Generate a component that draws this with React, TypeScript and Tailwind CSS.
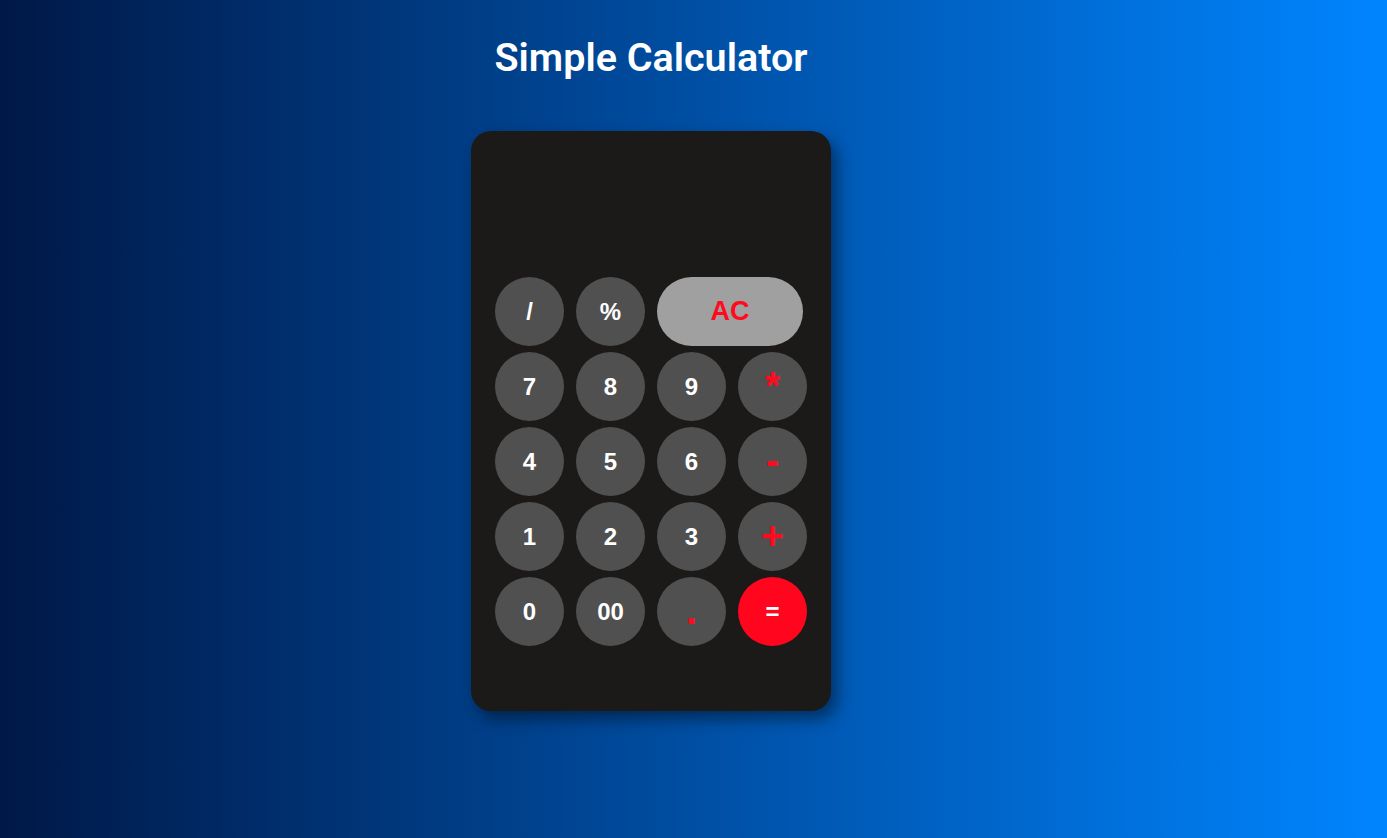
import React from "react";

type Btn = { label: string; kind: "num" | "op" | "ac" | "eq"; span?: boolean };

const rows: Btn[] = [
  { label: "/", kind: "num" },
  { label: "%", kind: "num" },
  { label: "AC", kind: "ac", span: true },
  { label: "7", kind: "num" },
  { label: "8", kind: "num" },
  { label: "9", kind: "num" },
  { label: "*", kind: "op" },
  { label: "4", kind: "num" },
  { label: "5", kind: "num" },
  { label: "6", kind: "num" },
  { label: "-", kind: "op" },
  { label: "1", kind: "num" },
  { label: "2", kind: "num" },
  { label: "3", kind: "num" },
  { label: "+", kind: "op" },
  { label: "0", kind: "num" },
  { label: "00", kind: "num" },
  { label: ".", kind: "op" },
  { label: "=", kind: "eq" },
];

function Key({ b }: { b: Btn }) {
  if (b.kind === "ac") {
    return (
      <button className="col-span-2 h-[69px] w-[146px] rounded-full bg-[#a0a0a0] text-[#ff0a1e] text-[27px] font-bold flex items-center justify-center">
        {b.label}
      </button>
    );
  }
  if (b.kind === "eq") {
    return (
      <button className="h-[69px] w-[69px] rounded-full bg-[#ff061e] text-white text-[24px] font-bold flex items-center justify-center">
        {b.label}
      </button>
    );
  }
  if (b.kind === "op") {
    return (
      <button className="h-[69px] w-[69px] rounded-full bg-[#505050] text-[#ff0a1e] text-[39px] font-bold flex items-center justify-center leading-none">
        <span className="leading-[1.15]">{b.label}</span>
      </button>
    );
  }
  return (
    <button className="h-[69px] w-[69px] rounded-full bg-[#505050] text-white text-[24px] font-bold flex items-center justify-center">
      {b.label}
    </button>
  );
}

export default function App() {
  return (
    <div className="min-h-[838px] w-full bg-[linear-gradient(to_right,#001847,#0085ff)]">
      <div className="ml-[471px] w-[360px] flex flex-col items-center">
        <h1
          className="mt-[32px] text-white text-[39.5px] font-semibold leading-[52px]"
          style={{ fontFamily: "Roboto, sans-serif" }}
        >
          Simple Calculator
        </h1>
        <div
          className="mt-[47px] w-[360px] h-[580px] rounded-[20px] bg-[#1c1a19] shadow-[6px_8px_16px_rgba(0,0,0,0.45)] px-[24px] pt-[146px]"
          style={{ fontFamily: "'Liberation Sans', Arial, sans-serif" }}
        >
          <div className="grid grid-cols-[69px_69px_69px_69px] gap-x-[12px] gap-y-[6px]">
            {rows.map((b, i) => (
              <Key key={i} b={b} />
            ))}
          </div>
        </div>
      </div>
    </div>
  );
}
